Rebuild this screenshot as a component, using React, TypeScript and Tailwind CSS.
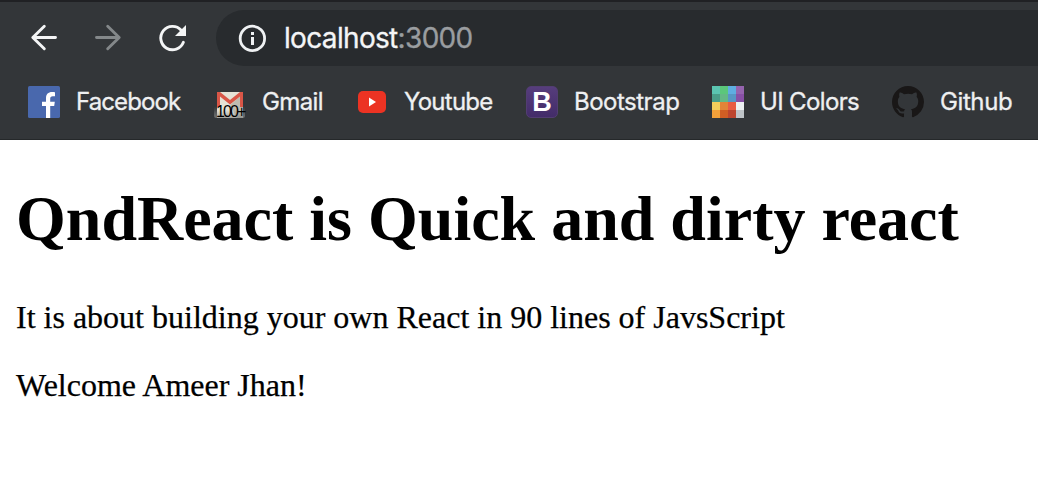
import type { ReactNode } from 'react';

function BackIcon() {
  return (
    <svg className="h-8 w-8" viewBox="0 0 32 32" fill="none" stroke="#f4f5f6" strokeWidth="2.9" strokeLinecap="round" strokeLinejoin="round">
      <path d="M27.5 15.5H5M16.3 4.2 4.8 15.5l11.5 11.3" />
    </svg>
  );
}

function ForwardIcon() {
  return (
    <svg className="h-8 w-8" viewBox="0 0 32 32" fill="none" stroke="#84888a" strokeWidth="2.9" strokeLinecap="round" strokeLinejoin="round">
      <path d="M4.5 15.5H27M15.7 4.2 27.2 15.5 15.7 26.8" />
    </svg>
  );
}

function ReloadIcon() {
  return (
    <svg className="h-8 w-8" viewBox="0 0 32 32">
      <path d="M27.4 20.3A11.7 11.7 0 1 1 25.2 8.2" fill="none" stroke="#f4f5f6" strokeWidth="2.9" strokeLinecap="round" />
      <path d="M30 3v11H19z" fill="#f4f5f6" />
    </svg>
  );
}

function InfoIcon() {
  return (
    <svg className="h-8 w-8" viewBox="0 0 32 32">
      <circle cx="16.4" cy="16.4" r="12.2" fill="none" stroke="#eff1f3" strokeWidth="2.8" />
      <path d="M15 10h3v3h-3zM15 15h3v8h-3z" fill="#eff1f3" />
    </svg>
  );
}

function FacebookIcon() {
  return (
    <svg className="h-8 w-8" viewBox="0 0 32 32">
      <rect width="32" height="32" rx="1.6" fill="#4968ad" />
      <path d="M18 32V20h-4v-4.3h4v-3.4c0-4 2.3-6.2 6-6.2 1.4 0 2.5.1 3 .2v4h-2.2c-2 0-2.6 1-2.6 2.5v2.9h4.6l-.6 4.3h-4V32z" fill="#fff" />
    </svg>
  );
}

function GmailIcon() {
  return (
    <span className="relative block h-8 w-8">
      <svg className="h-8 w-8" viewBox="0 0 32 32">
        <defs>
          <linearGradient id="badge" x2="0" y2="1">
            <stop stopColor="#77797a" stopOpacity="0" />
            <stop offset="1" stopColor="#777979" />
          </linearGradient>
        </defs>
        <rect x="0" y="20" width="31" height="12" rx="3" fill="url(#badge)" opacity=".7" />
        <path d="M3 6h26v26H3z" fill="#e5e2d6" />
        <path d="m16 19 13-11v24H23z" fill="#bebbb0" />
        <rect x="0" y="24" width="31" height="8" rx="2" fill="url(#badge)" opacity=".6" />
        <path d="M3 6h3l10 8 10-8h3v15h-3V10.5l-10 8-10-8V21H3z" fill="#d95647" />
      </svg>
      <span className="absolute top-[18px] left-[2px] font-['Liberation_Sans',sans-serif] text-[16px] leading-[16px] tracking-[-1.9px] text-black">100+</span>
    </span>
  );
}

function YoutubeIcon() {
  return (
    <svg className="h-8 w-8" viewBox="0 0 32 32">
      <rect x="2" y="5" width="28" height="22" rx="5" fill="#ec3323" />
      <path d="m13 11.4 7 4.6-7 4.6z" fill="#fff" />
    </svg>
  );
}

function BootstrapIcon() {
  return (
    <span className="flex h-8 w-8 items-center justify-center rounded-[5px] border border-[#523d72] bg-linear-to-b from-[#563d7c] to-[#432c69] font-['Liberation_Sans',sans-serif] text-[27px] leading-[32px] font-bold text-white">
      B
    </span>
  );
}

function PaletteIcon() {
  return (
    <span className="grid h-8 w-8 grid-cols-4">
      <i className="bg-[#5bc5b1]" /><i className="bg-[#5bc77b]" /><i className="bg-[#5faee1]" /><i className="bg-[#9564ae]" />
      <i className="bg-[#4a9e89]" /><i className="bg-[#64b985]" /><i className="bg-[#5797c5]" /><i className="bg-[#8850a6]" />
      <i className="bg-[#f4ce5b]" /><i className="bg-[#e38437]" /><i className="bg-[#e85c43]" /><i className="bg-[#edf1f2]" />
      <i className="bg-[#f2a03a]" /><i className="bg-[#d15e24]" /><i className="bg-[#bd452f]" /><i className="bg-[#bfc4c8]" />
    </span>
  );
}

function GithubIcon() {
  return (
    <svg className="h-8 w-8" viewBox="0 0 16 16" fill="#191717">
      <path d="M8 0C3.58 0 0 3.58 0 8c0 3.54 2.29 6.53 5.47 7.59.4.07.55-.17.55-.38 0-.19-.01-.82-.01-1.49-2.01.37-2.53-.49-2.69-.94-.09-.23-.48-.94-.82-1.13-.28-.15-.68-.52-.01-.53.63-.01 1.08.58 1.23.82.72 1.21 1.87.87 2.33.66.07-.52.28-.87.51-1.07-1.78-.2-3.64-.89-3.64-3.95 0-.87.31-1.59.82-2.15-.08-.2-.36-1.02.08-2.12 0 0 .67-.21 2.2.82.64-.18 1.32-.27 2-.27s1.36.09 2 .27c1.53-1.04 2.2-.82 2.2-.82.44 1.1.16 1.92.08 2.12.51.56.82 1.27.82 2.15 0 3.07-1.87 3.75-3.65 3.95.29.25.54.73.54 1.48 0 1.07-.01 1.93-.01 2.2 0 .21.15.46.55.38A8.01 8.01 0 0 0 16 8c0-4.42-3.58-8-8-8z" />
    </svg>
  );
}

type Bookmark = { label: string; icon: ReactNode; width: string; tracking: string };

const bookmarks: Bookmark[] = [
  { label: 'Facebook', icon: <FacebookIcon />, width: 'w-[186px]', tracking: 'tracking-[-0.9px]' },
  { label: 'Gmail', icon: <GmailIcon />, width: 'w-[142px]', tracking: 'tracking-[-0.6px]' },
  { label: 'Youtube', icon: <YoutubeIcon />, width: 'w-[170px]', tracking: 'tracking-[-0.75px]' },
  { label: 'Bootstrap', icon: <BootstrapIcon />, width: 'w-[186px]', tracking: 'tracking-[-0.5px]' },
  { label: 'UI Colors', icon: <PaletteIcon />, width: 'w-[180px]', tracking: 'tracking-[-0.65px]' },
  { label: 'Github', icon: <GithubIcon />, width: 'w-[146px]', tracking: 'tracking-[-0.4px]' },
];

export default function App() {
  return (
    <div className="h-[502px] w-full overflow-hidden bg-white">
      <header className="h-[140px] overflow-hidden border-t-2 border-b border-t-[#202124] border-b-[#25282a] bg-[#333639]">
        <div className="flex h-16 items-end">
          <nav className="flex h-14 w-[216px] shrink-0 items-center gap-8 pl-7">
            <BackIcon />
            <ForwardIcon />
            <ReloadIcon />
          </nav>
          <div className="flex h-14 flex-1 items-center gap-4 rounded-l-full bg-[#282b2e] pl-5">
            <InfoIcon />
            <span className="font-[Inter,sans-serif] text-[28px] leading-8 tracking-[-0.67px] text-[#f4f5f6] [-webkit-text-stroke:0.3px]">
              localhost<span className="text-[#9a9da0]">:3000</span>
            </span>
          </div>
        </div>
        <ul className="flex h-[72px] items-center pl-7">
          {bookmarks.map(({ label, icon, width, tracking }) => (
            <li key={label} className={`flex shrink-0 items-center gap-4 ${width}`}>
              {icon}
              <span className={`font-[Inter,sans-serif] text-[24px] leading-8 whitespace-nowrap text-[#eff0f1] [-webkit-text-stroke:0.3px] ${tracking}`}>{label}</span>
            </li>
          ))}
        </ul>
      </header>
      <main className="px-4 pt-[42px] font-['Liberation_Serif',serif] text-black">
        <h1 className="text-[64px] leading-[74px] font-bold whitespace-nowrap">QndReact is Quick and dirty react</h1>
        <p className="mt-[43px] text-[32px] leading-9 [-webkit-text-stroke:0.25px]">It is about building your own React in 90 lines of JavsScript</p>
        <p className="mt-8 text-[32px] leading-9 [-webkit-text-stroke:0.25px]">Welcome Ameer Jhan!</p>
      </main>
    </div>
  );
}
